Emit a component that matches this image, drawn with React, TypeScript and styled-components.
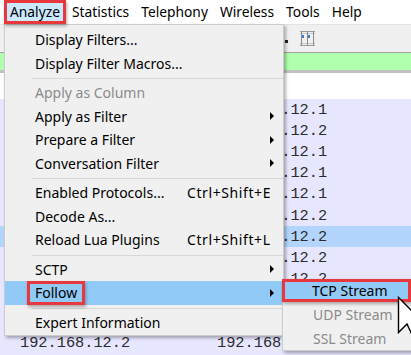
import React from 'react';
import styled, { createGlobalStyle, css } from 'styled-components';

const GlobalStyle = createGlobalStyle`
  html, body {
    margin: 0;
    padding: 0;
    background: #fff;
  }
`;

const uiFont = `'Noto Sans', 'Liberation Sans', sans-serif`;

const Screen = styled.div`
  position: relative;
  width: 411px;
  height: 355px;
  overflow: hidden;
  background: #e7e6ff;
  font-family: ${uiFont};
`;

const MenuBar = styled.div`
  display: flex;
  height: 24px;
  padding-left: 4px;
  background: #fff;
`;

const BarItem = styled.div<{ $open?: boolean }>`
  display: flex;
  align-items: center;
  padding: 0 6px 1px;
  font-size: 13.8px;
  color: #000;

  ${(p) =>
    p.$open &&
    css`
      position: relative;
      z-index: 3;
      background: #cce8ff;
      box-shadow: inset 0 0 0 3px #e8383d, 1px 2px 3px rgba(0, 0, 0, 0.3);
    `}
`;

const Toolbar = styled.div`
  display: flex;
  align-items: center;
  gap: 12px;
  height: 28px;
  padding-left: 285px;
  background: #f0f0f0;
  border-top: 1px solid #e3e3e3;
  box-sizing: border-box;
`;

const Nub = styled.div`
  width: 3px;
  height: 3px;
  margin-top: 5px;
  background: #222;
`;

const FilterBar = styled.div`
  height: 17px;
  background: #afffaf;
  border-top: 1px solid #a3a3a3;
  border-bottom: 3px solid #c2c2c2;
`;

const ListHeader = styled.div`
  height: 26px;
  background: #fff;
`;

const Row = styled.div<{ $selected?: boolean }>`
  display: flex;
  align-items: center;
  height: 21.2px;
  padding-left: 20px;
  background: ${(p) => (p.$selected ? '#b3d4fc' : '#e7e6ff')};
  font-family: 'Liberation Mono', 'DejaVu Sans Mono', monospace;
  font-size: 15.3px;
  color: #2b2b2b;
`;

const Cell = styled.div<{ $w: number }>`
  width: ${(p) => p.$w}px;
  flex: none;
  white-space: nowrap;
`;

const Dropdown = styled.div`
  position: absolute;
  left: 4px;
  top: 24px;
  z-index: 2;
  width: 280px;
  box-sizing: border-box;
  padding: 3px 0 1px;
  background: #f0f0f0;
  border: 1px solid #cccccc;
  box-shadow: 2px 2px 3px rgba(0, 0, 0, 0.3);
`;

const Item = styled.div<{ $disabled?: boolean; $active?: boolean }>`
  display: grid;
  grid-template-columns: 152px 1fr 14px;
  align-items: center;
  height: 23.5px;
  padding-left: 30px;
  font-size: 14px;
  color: ${(p) => (p.$disabled ? '#8b8b8b' : '#000')};
  background: ${(p) => (p.$active ? '#91c9f7' : 'transparent')};
  white-space: nowrap;
`;

const Label = styled.span<{ $boxed?: boolean }>`
  ${(p) =>
    p.$boxed &&
    css`
      justify-self: start;
      display: flex;
      align-items: center;
      height: 100%;
      margin-left: -8px;
      padding: 0 8px;
      box-sizing: border-box;
      box-shadow: inset 0 0 0 3px #e8383d, 1px 2px 3px rgba(0, 0, 0, 0.3);
    `}
`;

const Shortcut = styled.span`
  letter-spacing: 0.6px;
`;

const Arrow = styled.span`
  justify-self: start;
  margin-left: 1px;
  width: 0;
  height: 0;
  border-top: 4px solid transparent;
  border-bottom: 4px solid transparent;
  border-left: 4px solid #000;
`;

const Separator = styled.div`
  height: 1px;
  margin: 3px 0 2px 27px;
  background: #d7d7d7;
`;

const Submenu = styled.div`
  position: absolute;
  left: 282px;
  top: 279px;
  z-index: 4;
  width: 132px;
  box-sizing: border-box;
  background: #f0f0f0;
  border: 1px solid #cccccc;
  box-shadow: 2px 2px 3px rgba(0, 0, 0, 0.3);
`;

const SubItem = styled.div<{ $disabled?: boolean; $active?: boolean }>`
  display: flex;
  align-items: center;
  height: 24px;
  padding-left: 30px;
  font-size: 14px;
  color: ${(p) => (p.$disabled ? '#8b8b8b' : '#000')};
  white-space: nowrap;

  ${(p) =>
    p.$active &&
    css`
      margin: -1px 2px 0 -1px;
      height: 23px;
      background: #91c9f7;
      box-shadow: inset 0 0 0 3px #e8383d, 1px 2px 3px rgba(0, 0, 0, 0.3);
    `}
`;

const Cursor = styled.svg`
  position: absolute;
  left: 397px;
  top: 296px;
  z-index: 5;
`;

const ColumnsIcon = () => (
  <svg width="15" height="15" viewBox="0 0 15 15">
    <rect x="0" y="0" width="15" height="1" fill="#9a9a9a" />
    <rect x="0" y="2" width="15" height="1" fill="#c8c8c8" />
    <rect x="0" y="12" width="15" height="1" fill="#c8c8c8" />
    <rect x="0" y="14" width="15" height="1" fill="#9a9a9a" />
    <rect x="1" y="1" width="1" height="13" fill="#8a8a8a" />
    <rect x="7" y="1" width="1" height="13" fill="#8a8a8a" />
    <rect x="13" y="1" width="1" height="13" fill="#8a8a8a" />
    <rect x="2" y="4" width="2" height="3" fill="#3a7bd5" />
    <rect x="8" y="4" width="2" height="3" fill="#3a7bd5" />
  </svg>
);

// only what peeks out from under the menus is filled in
const rows: { src: string; dst: string; selected?: boolean }[] = [
  { src: '', dst: '192.168.12.1' },
  { src: '', dst: '192.168.12.2' },
  { src: '', dst: '192.168.12.1' },
  { src: '', dst: '192.168.12.1' },
  { src: '', dst: '192.168.12.1' },
  { src: '', dst: '192.168.12.2' },
  { src: '', dst: '192.168.12.2', selected: true },
  { src: '', dst: '192.168.12.2' },
  { src: '', dst: '192.168.12.2' },
  { src: '', dst: '' },
  { src: '', dst: '' },
  { src: '192.168.12.2', dst: '192.168.12.1' },
];

type Entry =
  | { sep: true }
  | { label: string; shortcut?: string; sub?: boolean; disabled?: boolean; active?: boolean };

const entries: Entry[] = [
  { label: 'Display Filters...' },
  { label: 'Display Filter Macros...' },
  { sep: true },
  { label: 'Apply as Column', disabled: true },
  { label: 'Apply as Filter', sub: true },
  { label: 'Prepare a Filter', sub: true },
  { label: 'Conversation Filter', sub: true },
  { sep: true },
  { label: 'Enabled Protocols...', shortcut: 'Ctrl+Shift+E' },
  { label: 'Decode As...' },
  { label: 'Reload Lua Plugins', shortcut: 'Ctrl+Shift+L' },
  { sep: true },
  { label: 'SCTP', sub: true },
  { label: 'Follow', sub: true, active: true },
  { sep: true },
  { label: 'Expert Information' },
];

const App = (): JSX.Element => {
  return (
    <Screen>
      <GlobalStyle />
      <MenuBar>
        <BarItem $open>Analyze</BarItem>
        <BarItem>Statistics</BarItem>
        <BarItem>Telephony</BarItem>
        <BarItem>Wireless</BarItem>
        <BarItem>Tools</BarItem>
        <BarItem>Help</BarItem>
      </MenuBar>
      <Toolbar>
        <Nub />
        <ColumnsIcon />
      </Toolbar>
      <FilterBar />
      <ListHeader />
      {rows.map((r, i) => (
        <Row key={i} $selected={r.selected}>
          <Cell $w={197}>{r.src}</Cell>
          <Cell $w={120}>{r.dst}</Cell>
        </Row>
      ))}

      <Dropdown>
        {entries.map((e, i) =>
          'sep' in e ? (
            <Separator key={i} />
          ) : (
            <Item key={i} $disabled={e.disabled} $active={e.active}>
              <Label $boxed={e.active}>{e.label}</Label>
              <Shortcut>{e.shortcut}</Shortcut>
              {e.sub ? <Arrow /> : <span />}
            </Item>
          )
        )}
      </Dropdown>

      <Submenu>
        <SubItem $active>TCP Stream</SubItem>
        <SubItem $disabled>UDP Stream</SubItem>
        <SubItem $disabled>SSL Stream</SubItem>
      </Submenu>

      <Cursor width="28" height="44" viewBox="0 0 28 44">
        <path
          d="M1.5 1.5 L1.5 36.5 L10 28 L16 41 L21 39 L15 26.5 L26.5 26.5 Z"
          fill="#fff"
          stroke="#000"
          strokeWidth="1.4"
          strokeLinejoin="miter"
        />
      </Cursor>
    </Screen>
  );
};

export default App;
